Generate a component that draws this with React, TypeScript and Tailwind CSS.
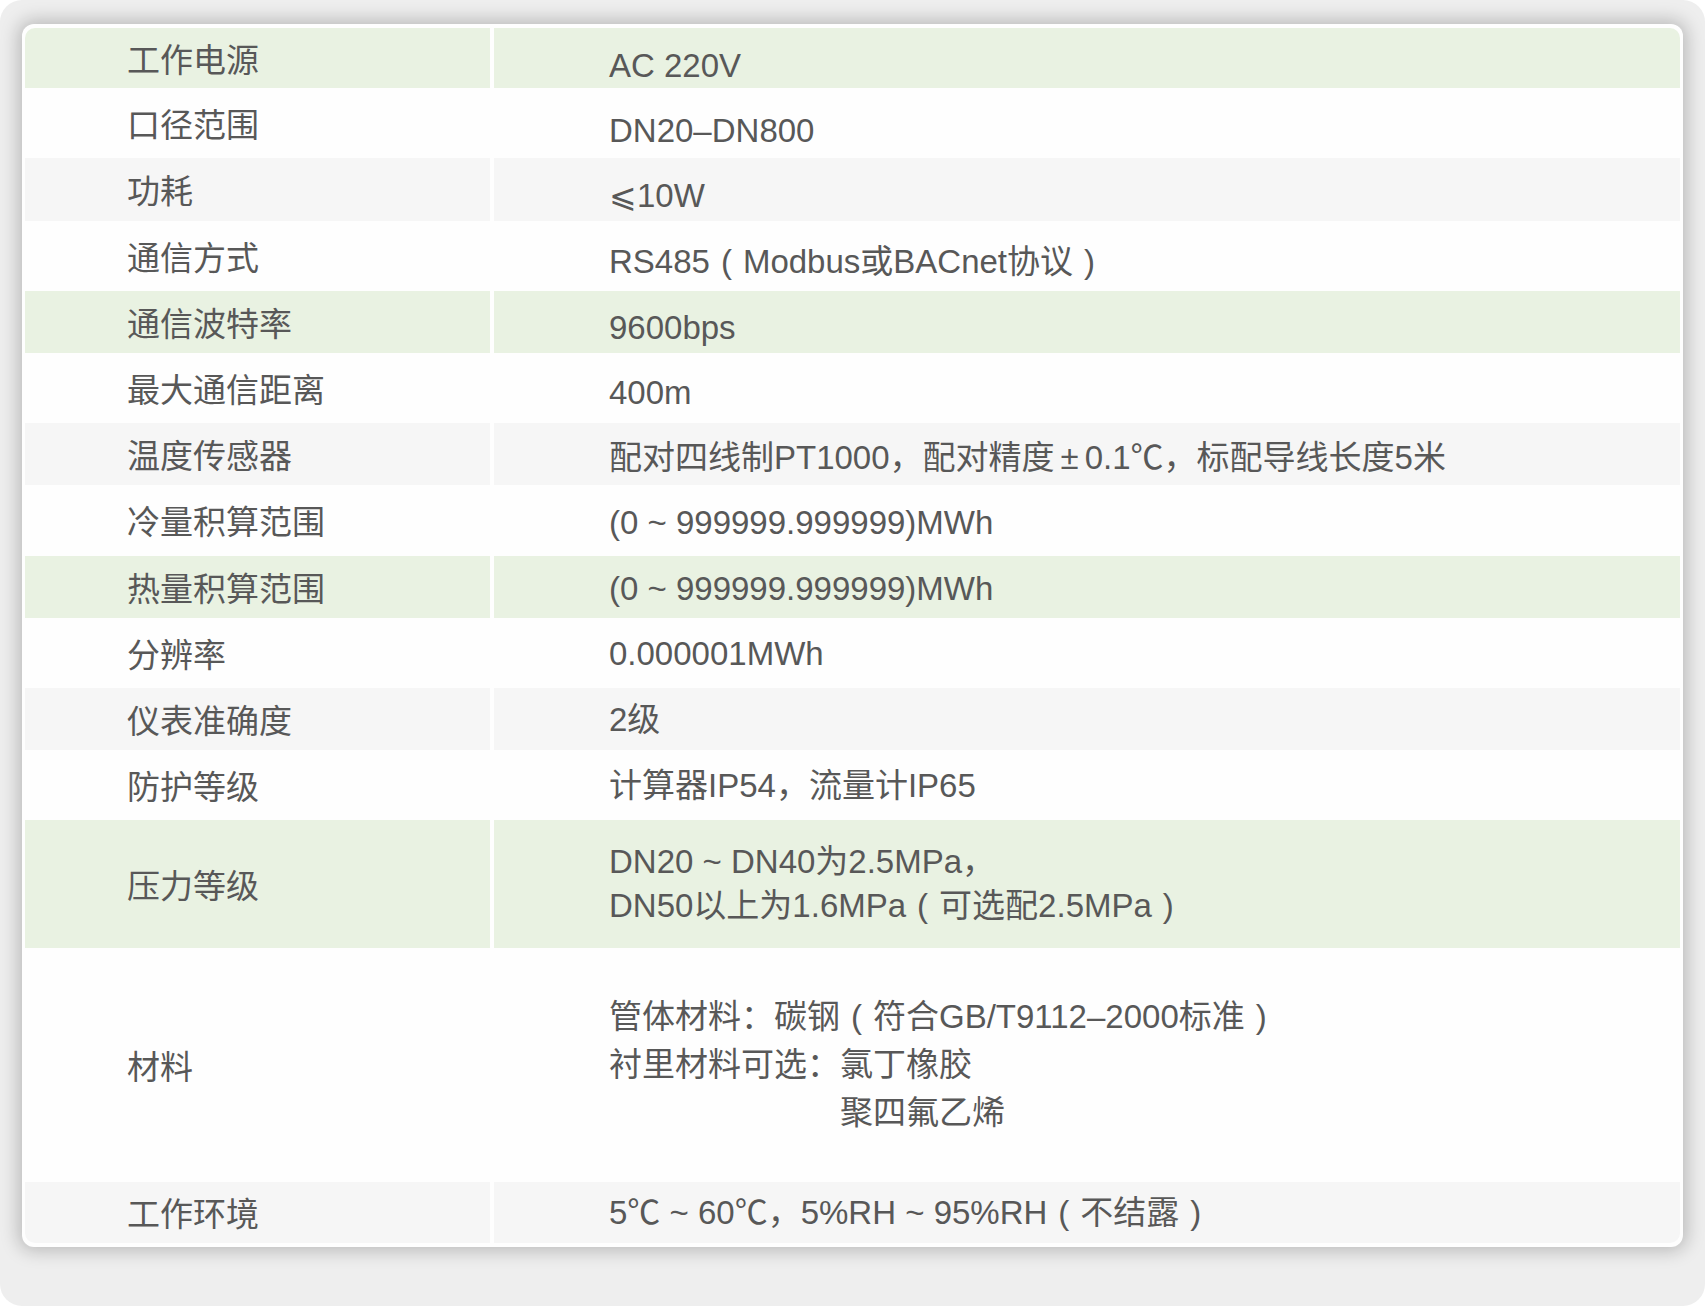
type Tone = "green" | "white" | "gray";

interface Spec {
  label: string;
  value: React.ReactNode;
  tone: Tone;
  height: string;
  valuePad?: string;
}

const toneBg: Record<Tone, string> = {
  green: "bg-[#e9f2e2]",
  white: "bg-[#fefefe]",
  gray: "bg-[#f6f6f6]",
};

// full-width bracket with the glyph centred in its cell
function P({ c }: { c: string }) {
  return <span className="inline-block w-[1em] text-center">{c}</span>;
}

const specs: Spec[] = [
  { label: "工作电源", value: "AC 220V", tone: "green", height: "h-[60px]", valuePad: "pt-[14px]" },
  { label: "口径范围", value: "DN20–DN800", tone: "white", height: "h-[70px]", valuePad: "pt-[14px]" },
  { label: "功耗", value: "⩽10W", tone: "gray", height: "h-[63px]", valuePad: "pt-[12px]" },
  {
    label: "通信方式",
    value: (
      <>
        RS485
        <P c="(" />
        Modbus或BACnet协议
        <P c=")" />
      </>
    ),
    tone: "white",
    height: "h-[70px]",
    valuePad: "pt-[11px]",
  },
  { label: "通信波特率", value: "9600bps", tone: "green", height: "h-[62px]", valuePad: "pt-[10px]" },
  { label: "最大通信距离", value: "400m", tone: "white", height: "h-[70px]", valuePad: "pt-[9px]" },
  {
    label: "温度传感器",
    value: (
      <>
        配对四线制PT1000，配对精度
        <span className="mx-[6px]">±</span>
        0.1℃，标配导线长度5米
      </>
    ),
    tone: "gray",
    height: "h-[62px]",
    valuePad: "pt-[6px]",
  },
  {
    label: "冷量积算范围",
    value: "(0 ~ 999999.999999)MWh",
    tone: "white",
    height: "h-[71px]",
    valuePad: "pt-[4px]",
  },
  {
    label: "热量积算范围",
    value: "(0 ~ 999999.999999)MWh",
    tone: "green",
    height: "h-[62px]",
    valuePad: "pt-[2px]",
  },
  { label: "分辨率", value: "0.000001MWh", tone: "white", height: "h-[70px]" },
  { label: "仪表准确度", value: "2级", tone: "gray", height: "h-[62px]" },
  { label: "防护等级", value: "计算器IP54，流量计IP65", tone: "white", height: "h-[70px]" },
  {
    label: "压力等级",
    value: (
      <div className="leading-[44px]">
        <div>DN20 ~ DN40为2.5MPa，</div>
        <div>
          DN50以上为1.6MPa
          <P c="(" />
          可选配2.5MPa
          <P c=")" />
        </div>
      </div>
    ),
    tone: "green",
    height: "h-[128px]",
  },
  {
    label: "材料",
    value: (
      <div className="leading-[48px]">
        <div>
          管体材料：碳钢
          <P c="(" />
          符合GB/T9112–2000标准
          <P c=")" />
        </div>
        <div>衬里材料可选：氯丁橡胶</div>
        <div className="pl-[7em]">聚四氟乙烯</div>
      </div>
    ),
    tone: "white",
    height: "h-[234px]",
  },
  {
    label: "工作环境",
    value: (
      <>
        5℃ ~ 60℃，5%RH ~ 95%RH
        <P c="(" />
        不结露
        <P c=")" />
      </>
    ),
    tone: "gray",
    height: "h-[61px]",
  },
];

function SpecRow({ spec }: { spec: Spec }) {
  const bg = toneBg[spec.tone];
  return (
    <div className={`flex ${spec.height}`}>
      <div className={`flex w-[465px] flex-none items-center pl-[102px] pt-[4px] ${bg}`}>
        {spec.label}
      </div>
      <div className="w-[4px] flex-none bg-[#fefefe]" />
      <div className={`flex flex-auto items-center pl-[115px] ${spec.valuePad ?? ""} ${bg}`}>
        <div>{spec.value}</div>
      </div>
    </div>
  );
}

export default function App() {
  return (
    <div className="h-[1306px] w-[1705px] bg-white">
      <div className="h-full w-full rounded-[22px] bg-[#eeeeee] px-[22px] pt-[24px]">
        <div className="rounded-[12px] bg-[#fefefe] px-[3px] py-[4px] shadow-[0_0_18px_4px_rgba(0,0,0,0.22)]">
          <div className="overflow-hidden rounded-[10px] font-['Liberation_Sans','Noto_Sans_CJK_SC',sans-serif] text-[33px] leading-none text-[#585858]">
            {specs.map((spec) => (
              <SpecRow key={spec.label} spec={spec} />
            ))}
          </div>
        </div>
      </div>
    </div>
  );
}
